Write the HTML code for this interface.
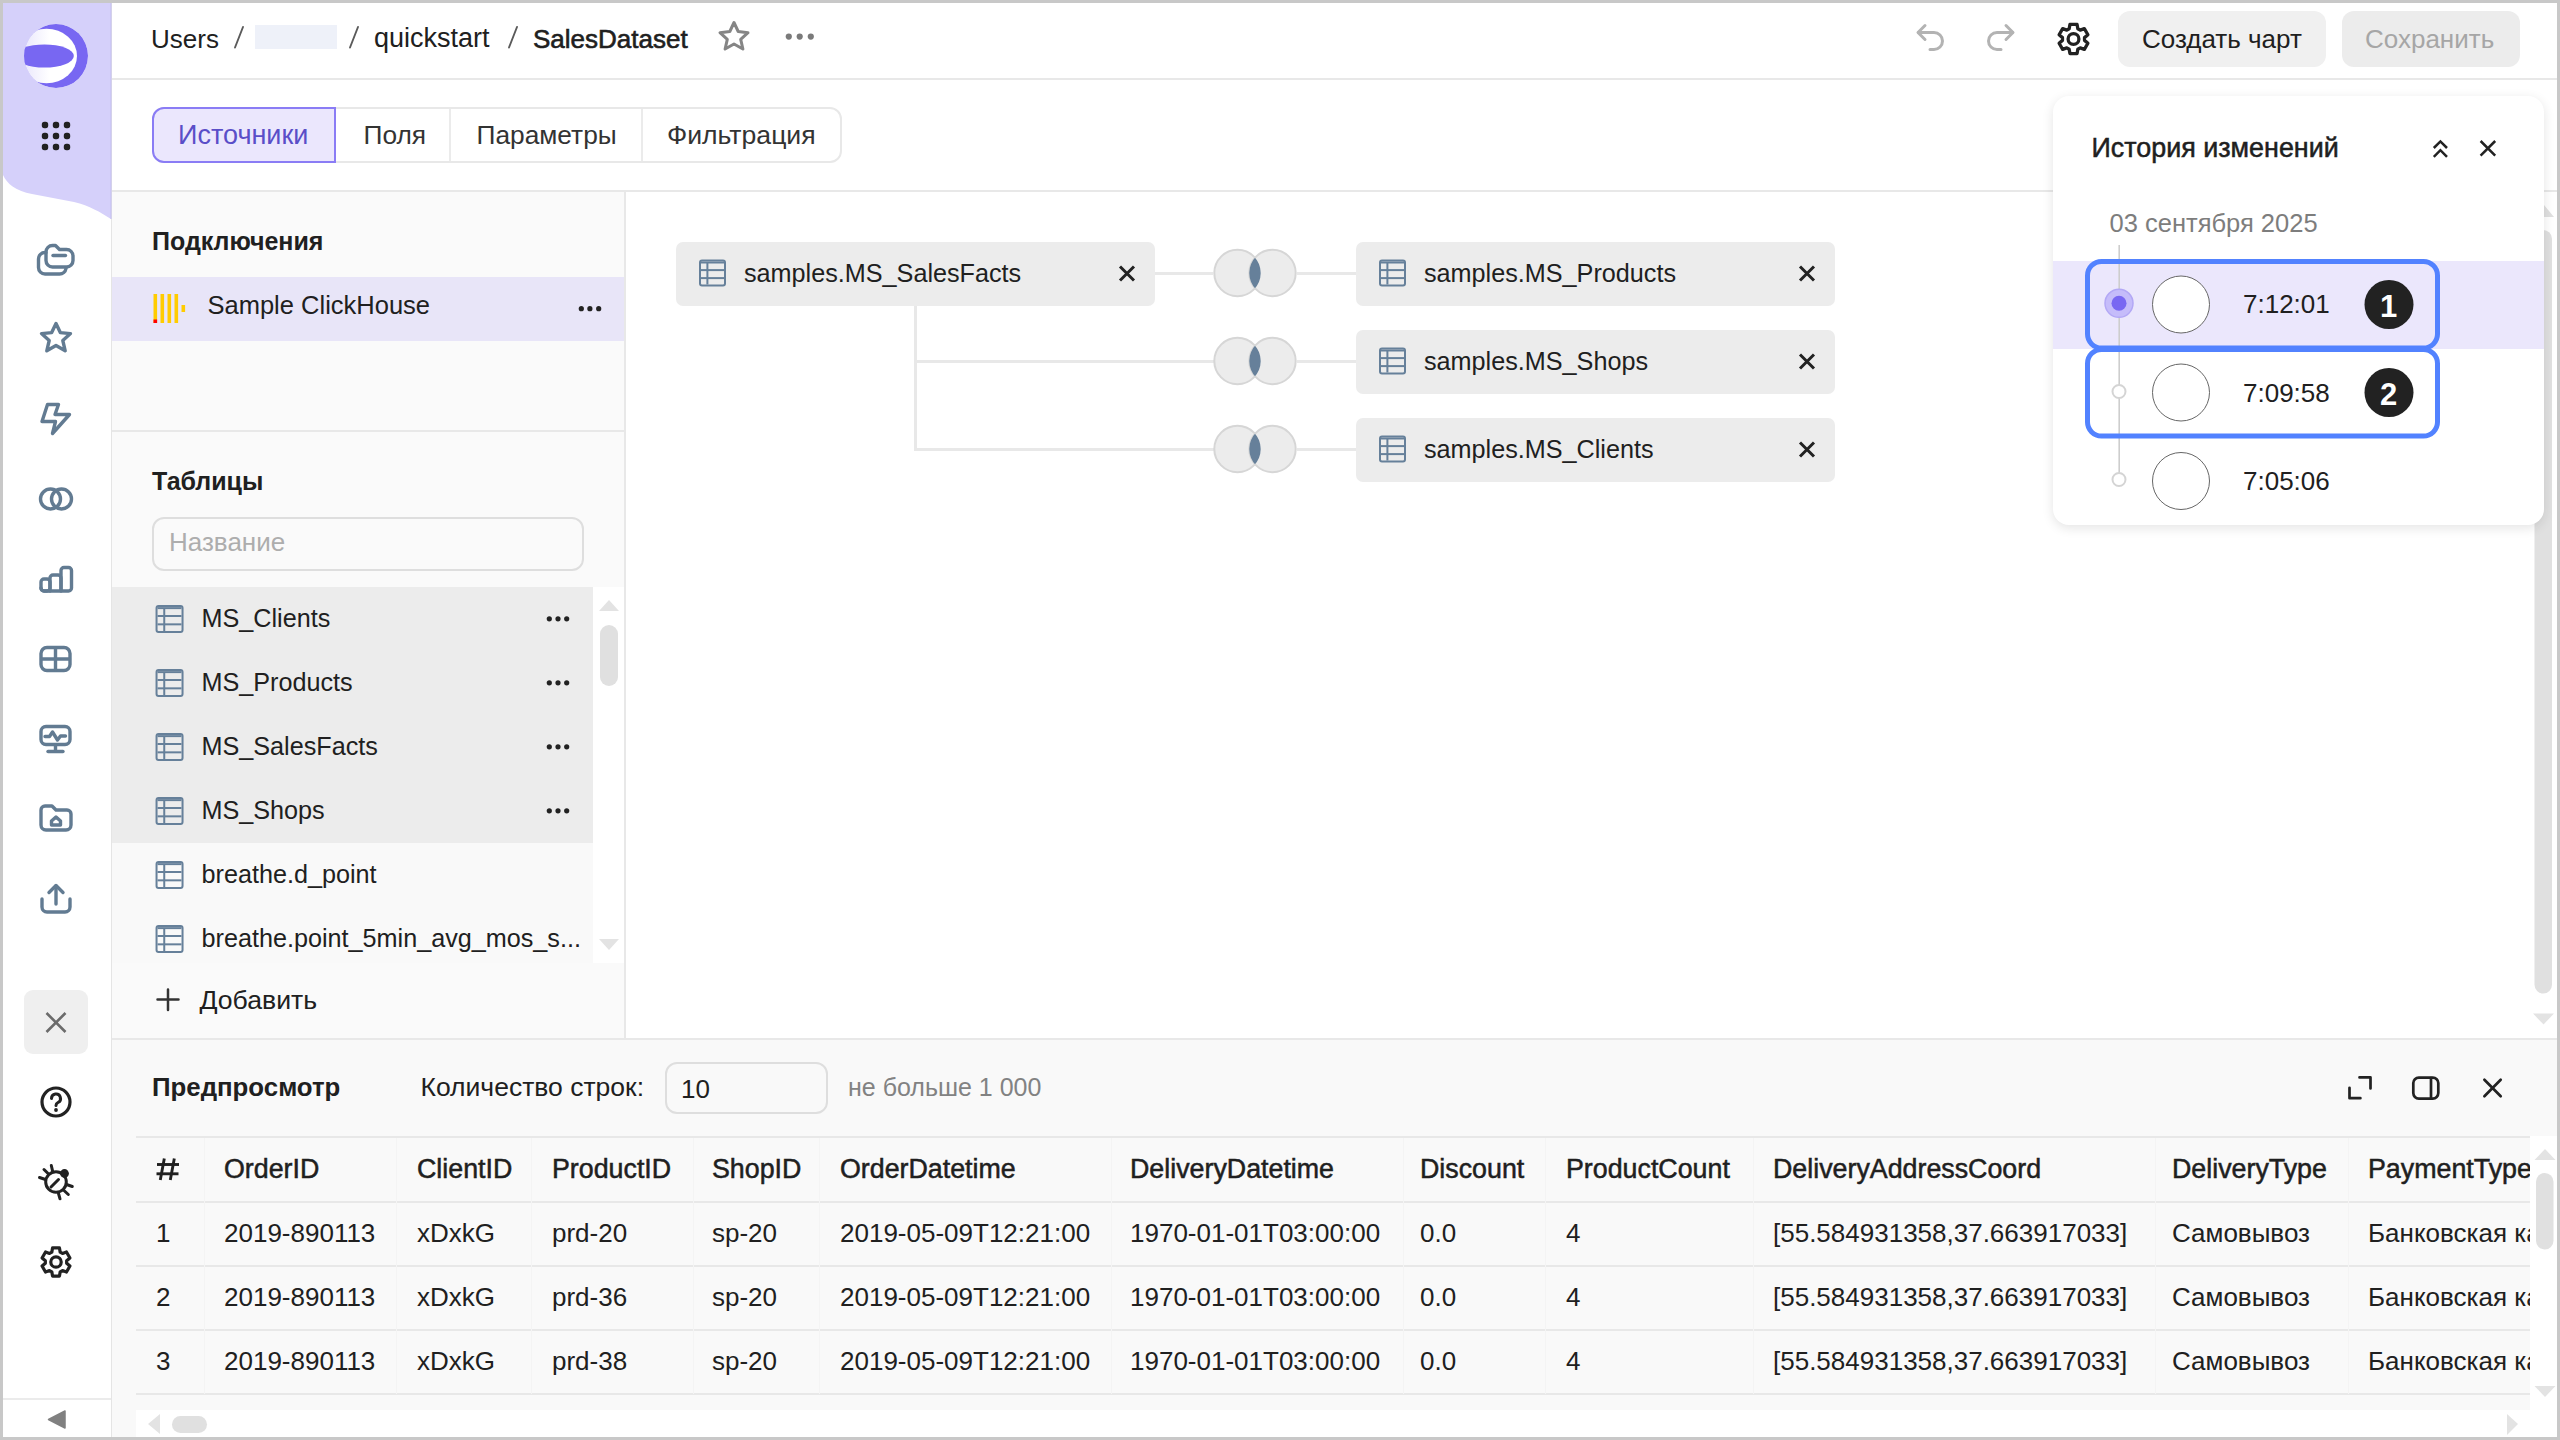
<!DOCTYPE html>
<html><head><meta charset="utf-8">
<style>
*{box-sizing:border-box;margin:0;padding:0}
html,body{width:2560px;height:1440px;overflow:hidden;background:#c8c8c8}
body{font-family:"Liberation Sans",sans-serif;color:#202020;position:relative}
.a{position:absolute}
.t{position:absolute;white-space:nowrap;line-height:1}
svg{position:absolute;overflow:visible}
</style></head><body>

<div class="a" style="left:3px;top:3px;width:2554px;height:1434px;background:#fff;"></div>
<div class="a" style="left:111px;top:3px;width:1px;height:1434px;background:#e5e5e5;"></div>
<svg style="left:0px;top:0px;" width="112" height="230" viewBox="0 0 112 230"><defs><linearGradient id="lg1" x1="0" x2="1" y1="0" y2="0"><stop offset="0" stop-color="#e3e0fb"/><stop offset="0.55" stop-color="#fff"/></linearGradient>
<clipPath id="lc"><circle cx="56" cy="56" r="32"/></clipPath></defs>
<path d="M3,3 H111 V219 C100,212 90,206 74,202 L32,194 C16,191 7,184 3,175 Z" fill="#d5d0fa"/>
<rect x="110.5" y="3" width="1" height="216" fill="#c4bdf0"/>
<g clip-path="url(#lc)"><circle cx="56" cy="56" r="32" fill="#7867f2"/>
<ellipse cx="46.5" cy="56" rx="30.5" ry="27.2" fill="url(#lg1)"/>
<ellipse cx="44.5" cy="56" rx="29.3" ry="11.6" fill="#7867f2"/></g>
<rect x="41.8" y="121.8" width="6.4" height="6.4" rx="2.6" fill="#222"/><rect x="41.8" y="132.8" width="6.4" height="6.4" rx="2.6" fill="#222"/><rect x="41.8" y="143.8" width="6.4" height="6.4" rx="2.6" fill="#222"/><rect x="52.8" y="121.8" width="6.4" height="6.4" rx="2.6" fill="#222"/><rect x="52.8" y="132.8" width="6.4" height="6.4" rx="2.6" fill="#222"/><rect x="52.8" y="143.8" width="6.4" height="6.4" rx="2.6" fill="#222"/><rect x="63.8" y="121.8" width="6.4" height="6.4" rx="2.6" fill="#222"/><rect x="63.8" y="132.8" width="6.4" height="6.4" rx="2.6" fill="#222"/><rect x="63.8" y="143.8" width="6.4" height="6.4" rx="2.6" fill="#222"/></svg>
<svg style="left:0px;top:0px;" width="112" height="1440" viewBox="0 0 112 1440">
<path d="M46,258 V252 a6.5,6.5 0 0 1 6.5,-6.5 h3 l4,4 h7 a6.5,6.5 0 0 1 6.5,6.5 v4.5 a6.5,6.5 0 0 1 -6.5,6.5 h-14 a6.5,6.5 0 0 1 -6.5,-6.5 z" fill="none" stroke="#627b92" stroke-width="3.4" stroke-linecap="round" stroke-linejoin="round"/>
<line x1="53" y1="255.5" x2="65.5" y2="255.5" fill="none" stroke="#627b92" stroke-width="3.4" stroke-linecap="round" stroke-linejoin="round"/>
<path d="M46,252.5 h-1 a6.5,6.5 0 0 0 -6.5,6.5 v8.5 a6.5,6.5 0 0 0 6.5,6.5 h14.5 a6.5,6.5 0 0 0 6.5,-5.5" fill="none" stroke="#627b92" stroke-width="3.4" stroke-linecap="round" stroke-linejoin="round"/>
<path d="M56,323.5 L60.3,332.6 L70.5,333.6 L62.8,340.5 L65.2,350.8 L56,345.5 L46.8,350.8 L49.2,340.5 L41.5,333.6 L51.7,332.6 Z" fill="none" stroke="#627b92" stroke-width="3.4" stroke-linecap="round" stroke-linejoin="round"/>
<path d="M47.5,404.5 H58.5 L55,414.5 H69.5 L52.5,433.5 L55.5,421.5 H42 Z" fill="none" stroke="#627b92" stroke-width="3.4" stroke-linecap="round" stroke-linejoin="round"/>
<circle cx="50.5" cy="499" r="10" fill="none" stroke="#627b92" stroke-width="3.4" stroke-linecap="round" stroke-linejoin="round"/><circle cx="61.5" cy="499" r="10" fill="none" stroke="#627b92" stroke-width="3.4" stroke-linecap="round" stroke-linejoin="round"/>
<rect x="41" y="579" width="9" height="12" rx="3" fill="none" stroke="#627b92" stroke-width="3.4" stroke-linecap="round" stroke-linejoin="round"/>
<path d="M50,591 V578 a3,3 0 0 1 3,-3 h5 a3,3 0 0 1 3,3 V591" fill="none" stroke="#627b92" stroke-width="3.4" stroke-linecap="round" stroke-linejoin="round"/>
<path d="M61,591 V570.5 a3,3 0 0 1 3,-3 h4.5 a3,3 0 0 1 3,3 V588 a3,3 0 0 1 -3,3 H44 a3,3 0 0 1 -3,-3" fill="none" stroke="#627b92" stroke-width="3.4" stroke-linecap="round" stroke-linejoin="round"/>
<rect x="41" y="647.5" width="29" height="23" rx="6" fill="none" stroke="#627b92" stroke-width="3.4" stroke-linecap="round" stroke-linejoin="round"/>
<line x1="55.5" y1="648" x2="55.5" y2="670" fill="none" stroke="#627b92" stroke-width="3.4" stroke-linecap="round" stroke-linejoin="round"/><line x1="41.5" y1="659" x2="69.5" y2="659" fill="none" stroke="#627b92" stroke-width="3.4" stroke-linecap="round" stroke-linejoin="round"/>
<rect x="41" y="726.5" width="29" height="18" rx="5" fill="none" stroke="#627b92" stroke-width="3.4" stroke-linecap="round" stroke-linejoin="round"/>
<path d="M45,736.5 h4.5 l3,-4.5 l5,8 l3,-4 h5" fill="none" stroke="#627b92" stroke-width="3.4" stroke-linecap="round" stroke-linejoin="round"/>
<line x1="55.5" y1="745" x2="55.5" y2="751" fill="none" stroke="#627b92" stroke-width="3.4" stroke-linecap="round" stroke-linejoin="round"/><line x1="48" y1="751.5" x2="63" y2="751.5" fill="none" stroke="#627b92" stroke-width="3.4" stroke-linecap="round" stroke-linejoin="round"/>
<path d="M41,810 a4,4 0 0 1 4,-4 h7 l4,4 h11 a4,4 0 0 1 4,4 v11 a5,5 0 0 1 -5,5 h-20 a5,5 0 0 1 -5,-5 z" fill="none" stroke="#627b92" stroke-width="3.4" stroke-linecap="round" stroke-linejoin="round"/>
<path d="M51.5,825 v-4 l4.5,-4 l4.5,4 v4 z" fill="none" stroke="#627b92" stroke-width="3.4" stroke-linecap="round" stroke-linejoin="round"/>
<path d="M42,899 v8 a5,5 0 0 0 5,5 h18 a5,5 0 0 0 5,-5 v-8" fill="none" stroke="#627b92" stroke-width="3.4" stroke-linecap="round" stroke-linejoin="round"/>
<line x1="56" y1="886" x2="56" y2="904" fill="none" stroke="#627b92" stroke-width="3.4" stroke-linecap="round" stroke-linejoin="round"/><path d="M49,892.5 L56,885.5 L63,892.5" fill="none" stroke="#627b92" stroke-width="3.4" stroke-linecap="round" stroke-linejoin="round"/>
</svg>
<div class="a" style="left:24px;top:990px;width:64px;height:64px;background:#efefef;border-radius:9px"></div>
<svg style="left:0px;top:0px;" width="112" height="1440" viewBox="0 0 112 1440">
<path d="M46.5,1013 L65.5,1032 M65.5,1013 L46.5,1032" fill="none" stroke="#6b6b6b" stroke-width="2.6"/>
<circle cx="56" cy="1102" r="14" fill="none" stroke="#222" stroke-width="3.2"/>
<path d="M51.5,1098.5 a4.5,4.5 0 1 1 6.5,4 c-1.3,.7 -2,1.5 -2,3" fill="none" stroke="#222" stroke-width="3" stroke-linecap="round"/>
<circle cx="56" cy="1110" r="1.9" fill="#222"/>
<g fill="none" stroke="#222" stroke-width="3" stroke-linecap="round">
<circle cx="56" cy="1182" r="10.3"/>
<line x1="51" y1="1187" x2="58.5" y2="1179.5"/>
<line x1="44" y1="1169.5" x2="47.8" y2="1173.3"/><line x1="51.3" y1="1165.5" x2="52.6" y2="1171.2"/><line x1="39.5" y1="1177.5" x2="45.5" y2="1179.5"/>
<line x1="72.3" y1="1186.5" x2="66.5" y2="1184.5"/><line x1="68.3" y1="1194.5" x2="64" y2="1190.5"/><line x1="60" y1="1198.8" x2="58.5" y2="1193.5"/>
</g>
<circle cx="64.5" cy="1173.5" r="4.4" fill="#222"/>
</svg>
<svg style="left:0px;top:0px;" width="112" height="1440" viewBox="0 0 112 1440"><path d="M51.82,1252.12 L52.55,1247.92 L59.45,1247.92 L60.18,1252.12 L62.47,1253.44 L66.47,1251.97 L69.92,1257.94 L66.65,1260.68 L66.65,1263.32 L69.92,1266.06 L66.47,1272.03 L62.47,1270.56 L60.18,1271.88 L59.45,1276.08 L52.55,1276.08 L51.82,1271.88 L49.53,1270.56 L45.53,1272.03 L42.08,1266.06 L45.35,1263.32 L45.35,1260.68 L42.08,1257.94 L45.53,1251.97 L49.53,1253.44 Z" fill="none" stroke="#222" stroke-width="3.2" stroke-linejoin="round"/><circle cx="56" cy="1262" r="5.22" fill="none" stroke="#222" stroke-width="3.2"/></svg>
<div class="a" style="left:3px;top:1398px;width:108px;height:2px;background:#ebebeb;"></div>
<svg style="left:0px;top:0px;" width="112" height="1440" viewBox="0 0 112 1440"><path d="M65,1411 L48.5,1419.5 L65,1428 Z" fill="#808080" stroke="#808080" stroke-width="1.5" stroke-linejoin="round"/></svg>
<div class="a" style="left:112px;top:78px;width:2445px;height:2px;background:#e8e8e8;"></div>
<div class="t" style="left:151px;top:25.99px;font-size:26px;color:#202020;font-weight:400;">Users</div>
<svg style="left:0px;top:0px;" width="900" height="80" viewBox="0 0 900 80"><g stroke="#5a5a5a" stroke-width="1.9" stroke-linecap="round"><line x1="235" y1="47.5" x2="243" y2="27"/><line x1="350" y1="47.5" x2="358" y2="27"/><line x1="509" y1="47.5" x2="517" y2="27"/></g></svg>
<div class="a" style="left:255px;top:25px;width:82px;height:24px;background:#eef1f9;"></div>
<div class="t" style="left:374px;top:25.14px;font-size:27px;color:#202020;font-weight:400;">quickstart</div>
<div class="t" style="left:533px;top:25.99px;font-size:26px;color:#202020;font-weight:400;-webkit-text-stroke:0.6px #202020">SalesDataset</div>
<svg style="left:0px;top:0px;" width="900" height="80" viewBox="0 0 900 80"><path d="M734,22.5 L738.2,31.5 L748,32.7 L740.7,39.4 L742.9,49 L734,44 L725.1,49 L727.3,39.4 L720,32.7 L729.8,31.5 Z" fill="none" stroke="#858585" stroke-width="3" stroke-linejoin="round" stroke-linecap="round"/><circle cx="788.8" cy="36.6" r="3.1" fill="#7a7a7a"/><circle cx="799.7" cy="36.6" r="3.1" fill="#7a7a7a"/><circle cx="810.8" cy="36.6" r="3.1" fill="#7a7a7a"/></svg>
<svg style="left:0px;top:0px;" width="2560" height="80" viewBox="0 0 2560 80"><g fill="none" stroke="#b3b3b3" stroke-width="3" stroke-linecap="round" stroke-linejoin="round">
<path d="M1925,25.5 L1918,32.5 L1925,39.5"/><path d="M1918.5,32.5 H1934 a8.5,8.5 0 0 1 0,17 H1930"/>
<path d="M2006,25.5 L2013,32.5 L2006,39.5"/><path d="M2012.5,32.5 H1997 a8.5,8.5 0 0 0 0,17 H2001"/>
</g><path d="M2069.18,28.78 L2069.93,24.43 L2077.07,24.43 L2077.82,28.78 L2080.19,30.14 L2084.34,28.63 L2087.90,34.80 L2084.52,37.63 L2084.52,40.37 L2087.90,43.20 L2084.34,49.37 L2080.19,47.86 L2077.82,49.22 L2077.07,53.57 L2069.93,53.57 L2069.18,49.22 L2066.81,47.86 L2062.66,49.37 L2059.10,43.20 L2062.48,40.37 L2062.48,37.63 L2059.10,34.80 L2062.66,28.63 L2066.81,30.14 Z" fill="none" stroke="#222" stroke-width="3.3" stroke-linejoin="round"/><circle cx="2073.5" cy="39" r="5.40" fill="none" stroke="#222" stroke-width="3.3"/></svg>
<div class="a" style="left:2118px;top:11px;width:208px;height:56px;background:#f0f0f0;border-radius:12px"></div>
<div class="t" style="left:2142px;top:25.99px;font-size:26px;color:#202020;font-weight:400;">Создать чарт</div>
<div class="a" style="left:2342px;top:11px;width:178px;height:56px;background:#ececec;border-radius:12px"></div>
<div class="t" style="left:2365px;top:25.99px;font-size:26px;color:#a6a6a6;font-weight:400;">Сохранить</div>
<div class="a" style="left:152px;top:107px;width:690px;height:56px;border:2px solid #e8e8e8;border-radius:12px"></div>
<div class="a" style="left:449px;top:109px;width:2px;height:52px;background:#ebebeb;"></div>
<div class="a" style="left:641px;top:109px;width:2px;height:52px;background:#ebebeb;"></div>
<div class="a" style="left:152px;top:107px;width:184px;height:56px;border:2px solid #8a7cf5;border-radius:12px 0 0 12px;background:#ebe7fd"></div>
<div class="t" style="left:178px;top:121.64px;font-size:27px;color:#5a4ec8;font-weight:400;">Источники</div>
<div class="t" style="left:363.5px;top:122.24px;font-size:26.3px;color:#333;font-weight:400;">Поля</div>
<div class="t" style="left:476.5px;top:122.24px;font-size:26.3px;color:#333;font-weight:400;">Параметры</div>
<div class="t" style="left:667px;top:121.98px;font-size:26.6px;color:#333;font-weight:400;">Фильтрация</div>
<div class="a" style="left:112px;top:190px;width:2445px;height:2px;background:#e8e8e8;"></div>
<div class="a" style="left:112px;top:192px;width:512px;height:846px;background:#fafafa;"></div>
<div class="a" style="left:624px;top:192px;width:2px;height:846px;background:#e8e8e8;"></div>
<div class="t" style="left:152px;top:228.84px;font-size:25px;color:#202020;font-weight:700;">Подключения</div>
<div class="a" style="left:112px;top:277px;width:512px;height:64px;background:#e8e5f8;"></div>
<svg style="left:0px;top:0px;" width="640" height="400" viewBox="0 0 640 400"><g fill="#fc0"><rect x="153.5" y="294" width="3.6" height="29"/><rect x="160.5" y="294" width="3.6" height="29"/><rect x="167.5" y="294" width="3.6" height="29"/><rect x="174.5" y="294" width="3.6" height="29"/><rect x="181.5" y="305" width="3.6" height="7"/></g><rect x="153.5" y="319.5" width="3.6" height="3.5" fill="#f00"/></svg>
<div class="t" style="left:207.5px;top:292.71px;font-size:25.5px;color:#202020;font-weight:400;">Sample ClickHouse</div>
<svg style="left:0px;top:0px;" width="640" height="400" viewBox="0 0 640 400"><circle cx="581.3" cy="308.7" r="2.6" fill="#222"/><circle cx="589.9" cy="308.7" r="2.6" fill="#222"/><circle cx="598.7" cy="308.7" r="2.6" fill="#222"/></svg>
<div class="a" style="left:112px;top:430px;width:512px;height:2px;background:#e8e8e8;"></div>
<div class="t" style="left:152px;top:469.34px;font-size:25px;color:#202020;font-weight:700;">Таблицы</div>
<div class="a" style="left:152px;top:517px;width:432px;height:54px;border:2px solid #dedede;border-radius:12px"></div>
<div class="t" style="left:169px;top:529.49px;font-size:26px;color:#adadad;font-weight:400;">Название</div>
<div class="a" style="left:112px;top:587px;width:481px;height:256px;background:#ececec;"></div>
<div class="a" style="left:112px;top:843px;width:481px;height:120px;background:#f9f9f9;"></div>
<div class="a" style="left:593px;top:587px;width:31px;height:376px;background:#fff;"></div>
<svg style="left:0px;top:0px;" width="640" height="1100" viewBox="0 0 640 1100"><g fill="none" stroke="#66809a" stroke-width="2"><rect x="156.54" y="606.04" width="26.0" height="26.0" rx="2"/><line x1="157.5" y1="608.12" x2="181.5" y2="608.12"/><line x1="157.5" y1="616.02" x2="181.5" y2="616.02"/><line x1="157.5" y1="624.34" x2="181.5" y2="624.34"/><line x1="164.24" y1="608.12" x2="164.24" y2="631.0"/></g><circle cx="549.3" cy="618.8" r="2.6" fill="#222"/><circle cx="558" cy="618.8" r="2.6" fill="#222"/><circle cx="566.7" cy="618.8" r="2.6" fill="#222"/><g fill="none" stroke="#66809a" stroke-width="2"><rect x="156.54" y="670.04" width="26.0" height="26.0" rx="2"/><line x1="157.5" y1="672.12" x2="181.5" y2="672.12"/><line x1="157.5" y1="680.02" x2="181.5" y2="680.02"/><line x1="157.5" y1="688.34" x2="181.5" y2="688.34"/><line x1="164.24" y1="672.12" x2="164.24" y2="695.0"/></g><circle cx="549.3" cy="682.8" r="2.6" fill="#222"/><circle cx="558" cy="682.8" r="2.6" fill="#222"/><circle cx="566.7" cy="682.8" r="2.6" fill="#222"/><g fill="none" stroke="#66809a" stroke-width="2"><rect x="156.54" y="734.04" width="26.0" height="26.0" rx="2"/><line x1="157.5" y1="736.12" x2="181.5" y2="736.12"/><line x1="157.5" y1="744.02" x2="181.5" y2="744.02"/><line x1="157.5" y1="752.34" x2="181.5" y2="752.34"/><line x1="164.24" y1="736.12" x2="164.24" y2="759.0"/></g><circle cx="549.3" cy="746.8" r="2.6" fill="#222"/><circle cx="558" cy="746.8" r="2.6" fill="#222"/><circle cx="566.7" cy="746.8" r="2.6" fill="#222"/><g fill="none" stroke="#66809a" stroke-width="2"><rect x="156.54" y="798.04" width="26.0" height="26.0" rx="2"/><line x1="157.5" y1="800.12" x2="181.5" y2="800.12"/><line x1="157.5" y1="808.02" x2="181.5" y2="808.02"/><line x1="157.5" y1="816.34" x2="181.5" y2="816.34"/><line x1="164.24" y1="800.12" x2="164.24" y2="823.0"/></g><circle cx="549.3" cy="810.8" r="2.6" fill="#222"/><circle cx="558" cy="810.8" r="2.6" fill="#222"/><circle cx="566.7" cy="810.8" r="2.6" fill="#222"/><g fill="none" stroke="#66809a" stroke-width="2"><rect x="156.54" y="862.04" width="26.0" height="26.0" rx="2"/><line x1="157.5" y1="864.12" x2="181.5" y2="864.12"/><line x1="157.5" y1="872.02" x2="181.5" y2="872.02"/><line x1="157.5" y1="880.34" x2="181.5" y2="880.34"/><line x1="164.24" y1="864.12" x2="164.24" y2="887.0"/></g><g fill="none" stroke="#66809a" stroke-width="2"><rect x="156.54" y="926.04" width="26.0" height="26.0" rx="2"/><line x1="157.5" y1="928.12" x2="181.5" y2="928.12"/><line x1="157.5" y1="936.02" x2="181.5" y2="936.02"/><line x1="157.5" y1="944.34" x2="181.5" y2="944.34"/><line x1="164.24" y1="928.12" x2="164.24" y2="951.0"/></g><path d="M599,611 L609,600 L619,611 Z" fill="#e3e3e3"/><rect x="600" y="625" width="18" height="61" rx="9" fill="#e0e0e0"/><path d="M599,939 L609,950 L619,939 Z" fill="#e3e3e3"/></svg>
<div class="t" style="left:201.5px;top:605.97px;font-size:25.2px;color:#202020;font-weight:400;">MS_Clients</div>
<div class="t" style="left:201.5px;top:669.97px;font-size:25.2px;color:#202020;font-weight:400;">MS_Products</div>
<div class="t" style="left:201.5px;top:733.97px;font-size:25.2px;color:#202020;font-weight:400;">MS_SalesFacts</div>
<div class="t" style="left:201.5px;top:797.97px;font-size:25.2px;color:#202020;font-weight:400;">MS_Shops</div>
<div class="t" style="left:201.5px;top:861.97px;font-size:25.2px;color:#202020;font-weight:400;">breathe.d_point</div>
<div class="t" style="left:201.5px;top:925.97px;font-size:25.2px;color:#202020;font-weight:400;">breathe.point_5min_avg_mos_s...</div>
<svg style="left:0px;top:0px;" width="640" height="1100" viewBox="0 0 640 1100"><path d="M168,989.5 V1010 M157.5,999.5 H178.5" stroke="#333" stroke-width="2.5" stroke-linecap="round" fill="none"/></svg>
<div class="t" style="left:199.5px;top:987.28px;font-size:26.6px;color:#202020;font-weight:400;">Добавить</div>
<div class="a" style="left:1155px;top:271.5px;width:58px;height:3px;background:#e8e8e8;"></div>
<div class="a" style="left:1297px;top:271.5px;width:59px;height:3px;background:#e8e8e8;"></div>
<div class="a" style="left:913.5px;top:305px;width:3px;height:146px;background:#e8e8e8;"></div>
<div class="a" style="left:913.5px;top:359.5px;width:300px;height:3px;background:#e8e8e8;"></div>
<div class="a" style="left:1297px;top:359.5px;width:59px;height:3px;background:#e8e8e8;"></div>
<div class="a" style="left:913.5px;top:447.5px;width:300px;height:3px;background:#e8e8e8;"></div>
<div class="a" style="left:1297px;top:447.5px;width:59px;height:3px;background:#e8e8e8;"></div>
<svg style="left:0px;top:0px;" width="2560" height="1440" viewBox="0 0 2560 1440"><defs><clipPath id="vc273"><circle cx="1237.5" cy="273" r="23.2"/></clipPath></defs><circle cx="1237.5" cy="273" r="23.2" fill="#ececec" stroke="#d6d6d6" stroke-width="2"/><circle cx="1272.5" cy="273" r="23.2" fill="#ececec" stroke="#d6d6d6" stroke-width="2"/><circle cx="1272.5" cy="273" r="23.2" fill="#66809a" clip-path="url(#vc273)"/><defs><clipPath id="vc361"><circle cx="1237.5" cy="361" r="23.2"/></clipPath></defs><circle cx="1237.5" cy="361" r="23.2" fill="#ececec" stroke="#d6d6d6" stroke-width="2"/><circle cx="1272.5" cy="361" r="23.2" fill="#ececec" stroke="#d6d6d6" stroke-width="2"/><circle cx="1272.5" cy="361" r="23.2" fill="#66809a" clip-path="url(#vc361)"/><defs><clipPath id="vc449"><circle cx="1237.5" cy="449" r="23.2"/></clipPath></defs><circle cx="1237.5" cy="449" r="23.2" fill="#ececec" stroke="#d6d6d6" stroke-width="2"/><circle cx="1272.5" cy="449" r="23.2" fill="#ececec" stroke="#d6d6d6" stroke-width="2"/><circle cx="1272.5" cy="449" r="23.2" fill="#66809a" clip-path="url(#vc449)"/></svg>
<div class="a" style="left:676px;top:242px;width:479px;height:63.5px;background:#ececec;border-radius:7px"></div>
<svg style="left:0px;top:0px;" width="2560" height="1440" viewBox="0 0 2560 1440"><g fill="none" stroke="#66809a" stroke-width="2"><rect x="700.0" y="260.5" width="25.0" height="25.0" rx="2"/><line x1="701" y1="262.5" x2="724.0" y2="262.5"/><line x1="701" y1="270.1" x2="724.0" y2="270.1"/><line x1="701" y1="278.1" x2="724.0" y2="278.1"/><line x1="707.4" y1="262.5" x2="707.4" y2="284.5"/></g><path d="M1120,266.5 L1134,280.5 M1134,266.5 L1120,280.5" stroke="#222" stroke-width="3" fill="none"/></svg>
<div class="t" style="left:744px;top:260.67px;font-size:25.2px;color:#202020;font-weight:400;">samples.MS_SalesFacts</div>
<div class="a" style="left:1356px;top:242px;width:479px;height:63.5px;background:#ececec;border-radius:7px"></div>
<svg style="left:0px;top:0px;" width="2560" height="1440" viewBox="0 0 2560 1440"><g fill="none" stroke="#66809a" stroke-width="2"><rect x="1380.0" y="260.5" width="25.0" height="25.0" rx="2"/><line x1="1381" y1="262.5" x2="1404.0" y2="262.5"/><line x1="1381" y1="270.1" x2="1404.0" y2="270.1"/><line x1="1381" y1="278.1" x2="1404.0" y2="278.1"/><line x1="1387.4" y1="262.5" x2="1387.4" y2="284.5"/></g><path d="M1800,266.5 L1814,280.5 M1814,266.5 L1800,280.5" stroke="#222" stroke-width="3" fill="none"/></svg>
<div class="t" style="left:1424px;top:260.67px;font-size:25.2px;color:#202020;font-weight:400;">samples.MS_Products</div>
<div class="a" style="left:1356px;top:330px;width:479px;height:63.5px;background:#ececec;border-radius:7px"></div>
<svg style="left:0px;top:0px;" width="2560" height="1440" viewBox="0 0 2560 1440"><g fill="none" stroke="#66809a" stroke-width="2"><rect x="1380.0" y="348.5" width="25.0" height="25.0" rx="2"/><line x1="1381" y1="350.5" x2="1404.0" y2="350.5"/><line x1="1381" y1="358.1" x2="1404.0" y2="358.1"/><line x1="1381" y1="366.1" x2="1404.0" y2="366.1"/><line x1="1387.4" y1="350.5" x2="1387.4" y2="372.5"/></g><path d="M1800,354.5 L1814,368.5 M1814,354.5 L1800,368.5" stroke="#222" stroke-width="3" fill="none"/></svg>
<div class="t" style="left:1424px;top:348.67px;font-size:25.2px;color:#202020;font-weight:400;">samples.MS_Shops</div>
<div class="a" style="left:1356px;top:418px;width:479px;height:63.5px;background:#ececec;border-radius:7px"></div>
<svg style="left:0px;top:0px;" width="2560" height="1440" viewBox="0 0 2560 1440"><g fill="none" stroke="#66809a" stroke-width="2"><rect x="1380.0" y="436.5" width="25.0" height="25.0" rx="2"/><line x1="1381" y1="438.5" x2="1404.0" y2="438.5"/><line x1="1381" y1="446.1" x2="1404.0" y2="446.1"/><line x1="1381" y1="454.1" x2="1404.0" y2="454.1"/><line x1="1387.4" y1="438.5" x2="1387.4" y2="460.5"/></g><path d="M1800,442.5 L1814,456.5 M1814,442.5 L1800,456.5" stroke="#222" stroke-width="3" fill="none"/></svg>
<div class="t" style="left:1424px;top:436.67px;font-size:25.2px;color:#202020;font-weight:400;">samples.MS_Clients</div>
<svg style="left:0px;top:0px;" width="2560" height="1440" viewBox="0 0 2560 1440"><path d="M2544,205 L2554,217 L2544,217 Z" fill="#e0e0e0"/><rect x="2534.5" y="230" width="17.5" height="763.5" rx="8.75" fill="#e0e0e0"/><path d="M2533,1013.5 L2554,1013.5 L2543.5,1024.5 Z" fill="#e3e3e3"/></svg>
<div class="a" style="left:112px;top:1038px;width:2445px;height:2px;background:#e8e8e8;"></div>
<div class="a" style="left:112px;top:1040px;width:2445px;height:397px;background:#f9f9f9;"></div>
<div class="t" style="left:152px;top:1074.66px;font-size:25.8px;color:#202020;font-weight:700;">Предпросмотр</div>
<div class="t" style="left:420.5px;top:1074.07px;font-size:26.5px;color:#202020;font-weight:400;">Количество строк:</div>
<div class="a" style="left:665px;top:1062px;width:163px;height:52px;border:2px solid #dedede;border-radius:12px"></div>
<div class="t" style="left:681px;top:1075.99px;font-size:26px;color:#202020;font-weight:400;">10</div>
<div class="t" style="left:848px;top:1075.34px;font-size:25px;color:#828282;font-weight:400;">не больше 1 000</div>
<svg style="left:0px;top:0px;" width="2560" height="1440" viewBox="0 0 2560 1440"><g fill="none" stroke="#222" stroke-width="2.7" stroke-linecap="round" stroke-linejoin="round">
<path d="M2349.5,1087.8 V1098.2 H2360.4 M2359.5,1077.4 H2370.5 V1088.4"/>
<rect x="2413.3" y="1077.6" width="25" height="21" rx="5.5"/><line x1="2431" y1="1078" x2="2431" y2="1098"/>
<path d="M2484.4,1079.7 L2500.7,1096.2 M2500.7,1079.7 L2484.4,1096.2"/>
</g></svg>
<div class="a" style="left:136px;top:1136px;width:2394px;height:274px;overflow:hidden">
<div class="a" style="left:0px;top:0px;width:2394px;height:2px;background:#e8e8e8;"></div>
<div class="a" style="left:0px;top:65px;width:2394px;height:2px;background:#e8e8e8;"></div>
<div class="a" style="left:0px;top:129px;width:2394px;height:2px;background:#e8e8e8;"></div>
<div class="a" style="left:0px;top:193px;width:2394px;height:2px;background:#e8e8e8;"></div>
<div class="a" style="left:0px;top:257px;width:2394px;height:2px;background:#e8e8e8;"></div>
<div class="a" style="left:68px;top:2px;width:1px;height:256px;background:#f4f4f4;"></div>
<div class="a" style="left:260px;top:2px;width:1px;height:256px;background:#f4f4f4;"></div>
<div class="a" style="left:395px;top:2px;width:1px;height:256px;background:#f4f4f4;"></div>
<div class="a" style="left:557px;top:2px;width:1px;height:256px;background:#f4f4f4;"></div>
<div class="a" style="left:683px;top:2px;width:1px;height:256px;background:#f4f4f4;"></div>
<div class="a" style="left:975px;top:2px;width:1px;height:256px;background:#f4f4f4;"></div>
<div class="a" style="left:1267px;top:2px;width:1px;height:256px;background:#f4f4f4;"></div>
<div class="a" style="left:1409px;top:2px;width:1px;height:256px;background:#f4f4f4;"></div>
<div class="a" style="left:1617px;top:2px;width:1px;height:256px;background:#f4f4f4;"></div>
<div class="a" style="left:2019px;top:2px;width:1px;height:256px;background:#f4f4f4;"></div>
<div class="a" style="left:2212px;top:2px;width:1px;height:256px;background:#f4f4f4;"></div>
<div class="t" style="left:20px;top:20.31px;font-size:26.8px;color:#202020;font-weight:400;-webkit-text-stroke:0.5px #202020"></div>
<div class="t" style="left:88px;top:20.31px;font-size:26.8px;color:#202020;font-weight:400;-webkit-text-stroke:0.5px #202020">OrderID</div>
<div class="t" style="left:281px;top:20.31px;font-size:26.8px;color:#202020;font-weight:400;-webkit-text-stroke:0.5px #202020">ClientID</div>
<div class="t" style="left:416px;top:20.31px;font-size:26.8px;color:#202020;font-weight:400;-webkit-text-stroke:0.5px #202020">ProductID</div>
<div class="t" style="left:576px;top:20.31px;font-size:26.8px;color:#202020;font-weight:400;-webkit-text-stroke:0.5px #202020">ShopID</div>
<div class="t" style="left:704px;top:20.31px;font-size:26.8px;color:#202020;font-weight:400;-webkit-text-stroke:0.5px #202020">OrderDatetime</div>
<div class="t" style="left:994px;top:20.31px;font-size:26.8px;color:#202020;font-weight:400;-webkit-text-stroke:0.5px #202020">DeliveryDatetime</div>
<div class="t" style="left:1284px;top:20.31px;font-size:26.8px;color:#202020;font-weight:400;-webkit-text-stroke:0.5px #202020">Discount</div>
<div class="t" style="left:1430px;top:20.31px;font-size:26.8px;color:#202020;font-weight:400;-webkit-text-stroke:0.5px #202020">ProductCount</div>
<div class="t" style="left:1637px;top:20.31px;font-size:26.8px;color:#202020;font-weight:400;-webkit-text-stroke:0.5px #202020">DeliveryAddressCoord</div>
<div class="t" style="left:2036px;top:20.31px;font-size:26.8px;color:#202020;font-weight:400;-webkit-text-stroke:0.5px #202020">DeliveryType</div>
<div class="t" style="left:2232px;top:20.31px;font-size:26.8px;color:#202020;font-weight:400;-webkit-text-stroke:0.5px #202020">PaymentType</div>
<div class="t" style="left:20px;top:83.99px;font-size:26px;color:#202020;font-weight:400;">1</div>
<div class="t" style="left:88px;top:83.99px;font-size:26px;color:#202020;font-weight:400;">2019-890113</div>
<div class="t" style="left:281px;top:83.99px;font-size:26px;color:#202020;font-weight:400;">xDxkG</div>
<div class="t" style="left:416px;top:83.99px;font-size:26px;color:#202020;font-weight:400;">prd-20</div>
<div class="t" style="left:576px;top:83.99px;font-size:26px;color:#202020;font-weight:400;">sp-20</div>
<div class="t" style="left:704px;top:83.99px;font-size:26px;color:#202020;font-weight:400;">2019-05-09T12:21:00</div>
<div class="t" style="left:994px;top:83.99px;font-size:26px;color:#202020;font-weight:400;">1970-01-01T03:00:00</div>
<div class="t" style="left:1284px;top:83.99px;font-size:26px;color:#202020;font-weight:400;">0.0</div>
<div class="t" style="left:1430px;top:83.99px;font-size:26px;color:#202020;font-weight:400;">4</div>
<div class="t" style="left:1637px;top:83.99px;font-size:26px;color:#202020;font-weight:400;">[55.584931358,37.663917033]</div>
<div class="t" style="left:2036px;top:83.99px;font-size:26px;color:#202020;font-weight:400;">Самовывоз</div>
<div class="t" style="left:2232px;top:83.99px;font-size:26px;color:#202020;font-weight:400;">Банковская карта</div>
<div class="t" style="left:20px;top:147.99px;font-size:26px;color:#202020;font-weight:400;">2</div>
<div class="t" style="left:88px;top:147.99px;font-size:26px;color:#202020;font-weight:400;">2019-890113</div>
<div class="t" style="left:281px;top:147.99px;font-size:26px;color:#202020;font-weight:400;">xDxkG</div>
<div class="t" style="left:416px;top:147.99px;font-size:26px;color:#202020;font-weight:400;">prd-36</div>
<div class="t" style="left:576px;top:147.99px;font-size:26px;color:#202020;font-weight:400;">sp-20</div>
<div class="t" style="left:704px;top:147.99px;font-size:26px;color:#202020;font-weight:400;">2019-05-09T12:21:00</div>
<div class="t" style="left:994px;top:147.99px;font-size:26px;color:#202020;font-weight:400;">1970-01-01T03:00:00</div>
<div class="t" style="left:1284px;top:147.99px;font-size:26px;color:#202020;font-weight:400;">0.0</div>
<div class="t" style="left:1430px;top:147.99px;font-size:26px;color:#202020;font-weight:400;">4</div>
<div class="t" style="left:1637px;top:147.99px;font-size:26px;color:#202020;font-weight:400;">[55.584931358,37.663917033]</div>
<div class="t" style="left:2036px;top:147.99px;font-size:26px;color:#202020;font-weight:400;">Самовывоз</div>
<div class="t" style="left:2232px;top:147.99px;font-size:26px;color:#202020;font-weight:400;">Банковская карта</div>
<div class="t" style="left:20px;top:211.99px;font-size:26px;color:#202020;font-weight:400;">3</div>
<div class="t" style="left:88px;top:211.99px;font-size:26px;color:#202020;font-weight:400;">2019-890113</div>
<div class="t" style="left:281px;top:211.99px;font-size:26px;color:#202020;font-weight:400;">xDxkG</div>
<div class="t" style="left:416px;top:211.99px;font-size:26px;color:#202020;font-weight:400;">prd-38</div>
<div class="t" style="left:576px;top:211.99px;font-size:26px;color:#202020;font-weight:400;">sp-20</div>
<div class="t" style="left:704px;top:211.99px;font-size:26px;color:#202020;font-weight:400;">2019-05-09T12:21:00</div>
<div class="t" style="left:994px;top:211.99px;font-size:26px;color:#202020;font-weight:400;">1970-01-01T03:00:00</div>
<div class="t" style="left:1284px;top:211.99px;font-size:26px;color:#202020;font-weight:400;">0.0</div>
<div class="t" style="left:1430px;top:211.99px;font-size:26px;color:#202020;font-weight:400;">4</div>
<div class="t" style="left:1637px;top:211.99px;font-size:26px;color:#202020;font-weight:400;">[55.584931358,37.663917033]</div>
<div class="t" style="left:2036px;top:211.99px;font-size:26px;color:#202020;font-weight:400;">Самовывоз</div>
<div class="t" style="left:2232px;top:211.99px;font-size:26px;color:#202020;font-weight:400;">Банковская карта</div>
</div>
<svg style="left:0px;top:0px;" width="2560" height="1440" viewBox="0 0 2560 1440"><g stroke="#202020" stroke-width="2.9" stroke-linecap="butt"><line x1="157" y1="1164.5" x2="179" y2="1164.5"/><line x1="156.5" y1="1173.8" x2="178.5" y2="1173.8"/><line x1="164.3" y1="1158.5" x2="160.3" y2="1180"/><line x1="174.3" y1="1158.5" x2="170.3" y2="1180"/></g></svg>
<div class="a" style="left:2530px;top:1136px;width:27px;height:274px;background:#fff;"></div>
<div class="a" style="left:136px;top:1410px;width:2421px;height:27px;background:#fff;"></div>
<svg style="left:0px;top:0px;" width="2560" height="1440" viewBox="0 0 2560 1440"><path d="M2534.5,1160 L2545,1149 L2555.5,1160 Z" fill="#e3e3e3"/><rect x="2536" y="1173" width="17.5" height="76.5" rx="8.75" fill="#e0e0e0"/><path d="M2534.5,1386 L2555.5,1386 L2545,1397 Z" fill="#e3e3e3"/><path d="M160,1414 L148,1424 L160,1434 Z" fill="#e3e3e3"/><rect x="172" y="1416" width="35" height="17" rx="8.5" fill="#e0e0e0"/><path d="M2507,1414 L2518,1424 L2507,1435 Z" fill="#e3e3e3"/></svg>
<div class="a" style="left:2053px;top:96px;width:491px;height:429px;background:#fff;border-radius:16px;box-shadow:0 3px 12px rgba(0,0,0,0.11);overflow:hidden">
<div class="t" style="left:38.5px;top:38.73px;font-size:26.9px;color:#202020;font-weight:400;-webkit-text-stroke:0.5px #202020">История изменений</div>
<svg style="left:0px;top:0px;" width="491" height="429" viewBox="0 0 491 429"><g fill="none" stroke="#222" stroke-width="2.5" stroke-linejoin="miter" stroke-linecap="butt" transform="translate(-2053,-96)"><path d="M2433.8,148 L2440.4,141.4 L2447,148 M2433.8,156.8 L2440.4,150.2 L2447,156.8"/><path d="M2480.6,141 L2495.2,155.6 M2495.2,141 L2480.6,155.6"/></g></svg>
<div class="t" style="left:56.5px;top:114.91px;font-size:25.5px;color:#7d7d7d;font-weight:400;">03 сентября 2025</div>
<div class="a" style="left:0px;top:165px;width:491px;height:88px;background:#ebe7fc;"></div>
<svg style="left:0px;top:0px;" width="491" height="429" viewBox="0 0 491 429"><g transform="translate(-2053,-96)">
<rect x="2118.4" y="245" width="1.6" height="228" fill="#cdcdcd"/>
<circle cx="2119" cy="303.3" r="14" fill="#c5bcfa" stroke="#b3a8f5" stroke-width="1.5"/>
<circle cx="2119" cy="303.3" r="7.5" fill="#7867f2"/>
<circle cx="2119" cy="391.5" r="6.5" fill="#fff" stroke="#d4d4d4" stroke-width="2"/>
<circle cx="2119" cy="479.5" r="6.5" fill="#fff" stroke="#d4d4d4" stroke-width="2"/>
<circle cx="2181" cy="304.5" r="28.5" fill="#fff" stroke="#666" stroke-width="1"/>
<circle cx="2181" cy="392.5" r="28.5" fill="#fff" stroke="#666" stroke-width="1"/>
<circle cx="2181" cy="481" r="28.5" fill="#fff" stroke="#666" stroke-width="1"/>
<rect x="2087.5" y="261.5" width="350" height="86.6" rx="14" fill="none" stroke="#5282ff" stroke-width="5"/>
<rect x="2087.5" y="349.5" width="350" height="86.6" rx="14" fill="none" stroke="#5282ff" stroke-width="5"/>
<circle cx="2389" cy="304.5" r="24.5" fill="#222"/>
<circle cx="2389" cy="392.5" r="24.5" fill="#222"/>
</g></svg>
<div class="t" style="left:190px;top:195.49px;font-size:26px;color:#202020;font-weight:400;">7:12:01</div>
<div class="t" style="left:190px;top:283.99px;font-size:26px;color:#202020;font-weight:400;">7:09:58</div>
<div class="t" style="left:190px;top:371.99px;font-size:26px;color:#202020;font-weight:400;">7:05:06</div>
<div class="t" style="left:327px;top:195.26px;font-size:31px;color:#fff;font-weight:700;">1</div>
<div class="t" style="left:327px;top:283.26px;font-size:31px;color:#fff;font-weight:700;">2</div>
</div>
</body></html>
